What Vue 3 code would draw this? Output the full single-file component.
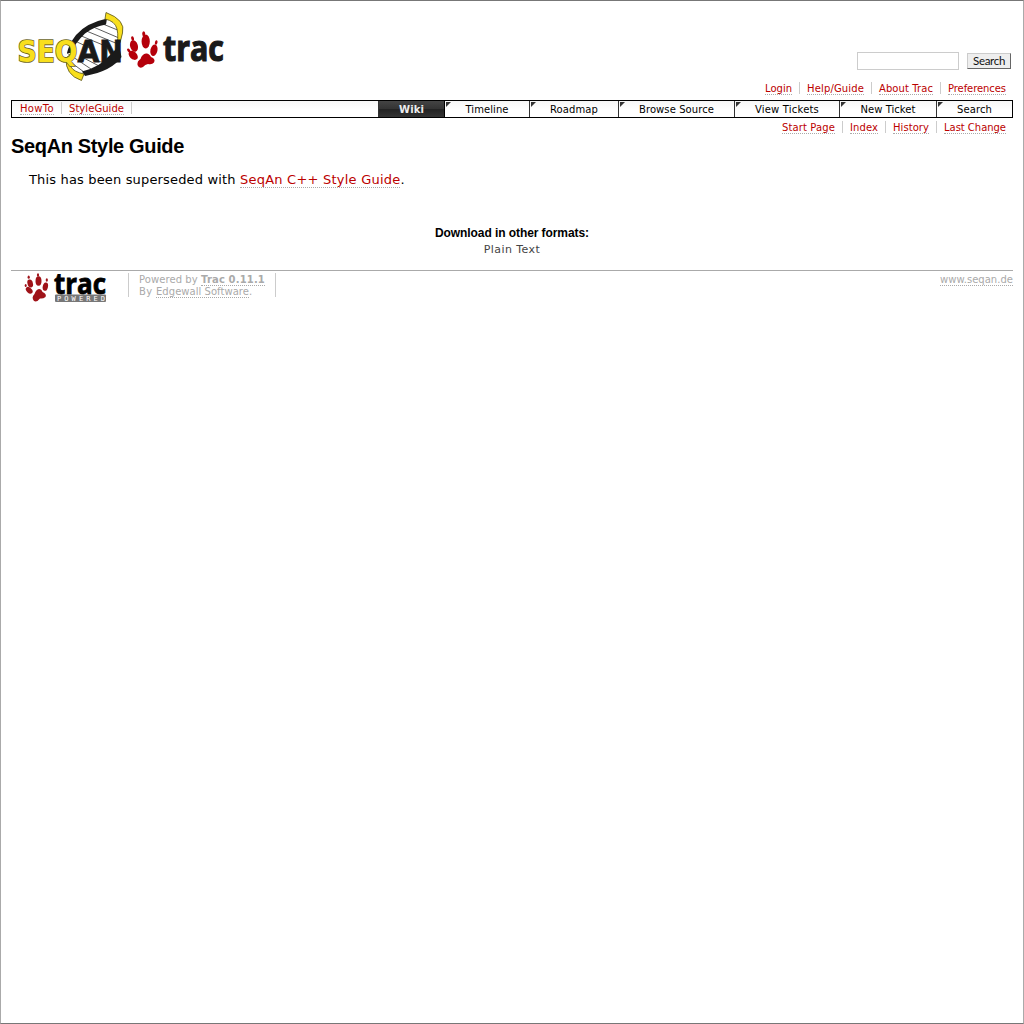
<script setup>
const vFit = {
  mounted(el, { value }) {
    const n = el.textContent.length
    const w = el.getBoundingClientRect().width
    el.style.letterSpacing = ((value - w) / n).toFixed(3) + 'px'
  }
}
const meta = [['Login', 27], ['Help/Guide', 57], ['About Trac', 54], ['Preferences', 58]]
const context = [['Start Page', 53], ['Index', 28], ['History', 36], ['Last Change', 62]]
const tabs = [
  ['Wiki', 66, 25], ['Timeline', 85, 43], ['Roadmap', 89, 48], ['Browse Source', 116, 75],
  ['View Tickets', 105, 64], ['New Ticket', 97, 55], ['Search', 76, 35]
]
</script>

<template>
  <div class="page">
    <header class="banner">
      <svg class="logo" width="236" height="90" viewBox="0 0 236 90">
        <path d="M105 22Q114 24 119 29L121 39L120 50Q113 66 84 74L67 61Q69 44 80 34Q91 25 105 22Z" fill="#fff" />
        <g stroke="#333" stroke-width=".8">
          <path d="M98 22L120 31M91 26L119 38M84 30L118 44M79 35L103 45M75 41L90 48M67 53L91 69M69 61L84 72M80 56L99 66M96 60L106 64" />
        </g>
        <path d="M107 18.500Q86 23 76 35Q69 44 67 53L71 53Q75 43 85 33.500Q95 26 106 24.500Z" fill="#1a1a1a" />
        <path d="M119 46L121.500 57Q112 71 85 76L82 71.500Q100 67 109 56Z" fill="#1a1a1a" />
        <path d="M106 12.500Q126 20 122.500 33Q121 43 116 50Q119 37 117 29Q115 21 105 19Z" fill="#f8df1d" stroke="#55501a" stroke-width=".8" />
        <path d="M71 54Q68 60 71 67Q74 72 84 74L81.500 80.500Q65 75 66 58Z" fill="#f8df1d" stroke="#55501a" stroke-width=".8" />
        <g class="seq">
          <text x="17.500" y="62" textLength="60" lengthAdjust="spacingAndGlyphs" class="outline">SEQ</text>
          <text x="77.500" y="61.500" textLength="45.500" lengthAdjust="spacingAndGlyphs" fill="#1a1a1a" stroke="#1a1a1a" stroke-width=".8">AN</text>
        </g>
        <g fill="#b5000b">
          <ellipse cx="145.700" cy="41.500" rx="4.100" ry="7" />
          <ellipse cx="134" cy="46" rx="3.900" ry="5.900" transform="rotate(-16 134 46)" />
          <ellipse cx="154" cy="50.300" rx="3.500" ry="5.800" transform="rotate(12 154 50)" />
          <ellipse cx="133.300" cy="55.500" rx="3.700" ry="5.400" transform="rotate(-45 133 55.500)" />
          <ellipse cx="143.700" cy="33.800" rx="1.500" ry="2.500" />
          <ellipse cx="132.600" cy="38.500" rx="1.400" ry="2.300" transform="rotate(-15 132.600 38.500)" />
          <ellipse cx="156.300" cy="42.500" rx="1.300" ry="2.300" transform="rotate(12 156 42)" />
          <ellipse cx="128.700" cy="50.400" rx="1.300" ry="2" transform="rotate(-40 128.700 50.400)" />
          <path d="M146 53.500Q149 53 151 57Q156 59 154 62.500Q152 65 148 64Q145 64.500 143 67Q139 69 137.500 65Q137 61 140.500 59Q142 54 146 53.500Z" />
        </g>
        <text class="word" x="163" y="61" textLength="61" lengthAdjust="spacingAndGlyphs">trac</text>
      </svg>
      <form class="search" @submit.prevent>
        <input type="text" aria-label="Search text">
        <button type="submit"><span v-fit="32">Search</span></button>
      </form>
    </header>
    <nav class="links meta">
      <span v-for="[t, w] in meta" :key="t" class="item"><a v-fit="w">{{ t }}</a></span>
    </nav>
    <nav class="mainnav">
      <div class="quick">
        <span class="item"><a v-fit="34">HowTo</a></span>
        <span class="item"><a v-fit="55">StyleGuide</a></span>
      </div>
      <div v-for="([t, w, f], i) in tabs" :key="t" class="tab" :class="{ active: i === 0 }" :style="{ width: w + 'px' }">
        <svg v-if="i" class="corner" width="5" height="5"><path d="M0 0H5L0 5Z" fill="#333" /></svg>
        <span v-fit="f">{{ t }}</span>
      </div>
    </nav>
    <nav class="links context">
      <span v-for="[t, w] in context" :key="t" class="item"><a v-fit="w">{{ t }}</a></span>
    </nav>
    <main>
      <h1><span v-fit="173">SeqAn Style Guide</span></h1>
      <p><span v-fit="211">This has been superseded with </span><a v-fit="160.500">SeqAn C++ Style Guide</a>.</p>
    </main>
    <section class="formats">
      <h3><span v-fit="154">Download in other formats:</span></h3>
      <div><span v-fit="56.500">Plain Text</span></div>
    </section>
    <footer>
      <svg class="powered" width="107" height="32" viewBox="0 0 107 32">
        <g fill="#9f1218">
          <ellipse cx="27.500" cy="8" rx="3" ry="4.800" />
          <ellipse cx="19.200" cy="10.500" rx="2.700" ry="4.100" transform="rotate(-16 19 10.500)" />
          <ellipse cx="34.300" cy="13.700" rx="2.600" ry="4.200" transform="rotate(12 34.500 14)" />
          <ellipse cx="18.300" cy="17.500" rx="2.600" ry="4" transform="rotate(-45 18 17.500)" />
          <ellipse cx="27" cy="1.900" rx="1.100" ry="1.700" />
          <ellipse cx="17.700" cy="4.200" rx="1.100" ry="1.600" />
          <ellipse cx="35.800" cy="7" rx="1.100" ry="1.800" />
          <ellipse cx="14.700" cy="12.500" rx="1" ry="1.500" />
          <path d="M28 16Q30.500 16 31.500 19Q36 21 34.500 24Q32 26 29 25.500Q26 29.500 23 28Q20 24.500 23.500 21Q25 16.500 28 16Z" />
        </g>
        <text class="small-word" x="43" y="20.800" textLength="52" lengthAdjust="spacingAndGlyphs">trac</text>
        <rect x="44" y="21.500" width="51" height="7.500" rx="1" fill="#777" />
        <text class="tiny" x="46" y="28" textLength="48" lengthAdjust="spacing">POWERED</text>
      </svg>
      <div class="credit">
        <div><span v-fit="62">Powered by </span><a v-fit="64"><b>Trac 0.11.1</b></a></div>
        <div><span v-fit="17">By </span><a v-fit="93">Edgewall Software</a>.</div>
      </div>
      <div class="site"><a v-fit="73">www.seqan.de</a></div>
    </footer>
  </div>
</template>

<style>
body { background: #fff; }
</style>

<style scoped>
* { box-sizing: border-box; }
.page {
  height: 1024px;
  padding: 0 10px;
  border: 1px solid #aaa;
  border-top-color: #777;
  border-bottom-color: #777;
  background: #fff;
  color: #000;
  font: 13px/15px Verdana, "DejaVu Sans", sans-serif;
  overflow: hidden;
}
span, a, b { white-space: pre; }
a { display: inline-block; color: #b00; border-bottom: 1px dotted #aaa; }
.banner { display: flex; justify-content: space-between; height: 80px; margin-left: -11px; margin-top: -1px; }
.logo { display: block; }
.seq { font: bold 30.500px "DejaVu Sans", sans-serif; }
.outline { fill: #f8df1d; stroke: #6b641f; stroke-width: 1.6px; paint-order: stroke; }
.word { font: bold 35px "Open Sans", sans-serif; fill: #1a1a1a; stroke: #1a1a1a; stroke-width: 1.2px; }
.search { display: flex; gap: 8px; padding: 52px 2px 0 0; }
.search input { width: 102px; height: 18px; padding: 0 3px; border: 1px solid #ccc; outline: 0; }
.search button {
  display: flex; justify-content: center; width: 44px; height: 16px; margin-top: 1px; padding: 0;
  border: 1px solid #666; border-top-color: #ccc; border-left-color: #ccc; border-radius: 0;
  background: #eee; color: #111; font: 11.500px/14px Lato, "Open Sans", sans-serif;
}
.links { display: flex; justify-content: flex-end; height: 20px; padding-top: 2px; font-size: 10px; line-height: 14px; }
.item { display: flex; height: 12px; padding: 0 7px; border-right: 1px solid #ccc; }
.item a { height: 13px; }
.links .item:last-child { border: 0; padding-right: 7px; }
.mainnav {
  display: flex; height: 18px; border: 1px solid #000; font-size: 10px;
  background: linear-gradient(#f6f6f6, #fff 60%);
}
.quick { display: flex; flex: 1; padding: 1px 0 0 1px; line-height: 14px; }
.tab { position: relative; display: flex; justify-content: center; border-left: 1px solid #333; line-height: 17px; }
.tab:nth-child(3) { border-left-color: #000; }
.tab.active { background: linear-gradient(#444, #333 50%, #222 51%, #333); color: #eee; font-weight: bold; }
.corner { position: absolute; left: 1px; top: 1px; }
.context { height: 18px; padding-top: 3px; }
h1 { margin: -1px 0 0; font: bold 20px/22px "Liberation Sans", Arial, sans-serif; }
main p { margin: 15px 18px 0; line-height: 15px; }
main p a { height: 16px; vertical-align: top; }
.formats { margin-top: 37px; text-align: center; font-size: 11px; color: #444; }
.formats h3 { margin: 0; color: #000; font: bold 12px/16px "Liberation Sans", Arial, sans-serif; }
.formats div { line-height: 17px; }
footer { display: flex; height: 36px; margin-top: 12px; padding-top: 2px; border-top: 1px solid #aaa; color: #aaa; font-size: 10px; line-height: 14px; }
footer a { color: #aaa; border-color: #aaa; height: 13px; vertical-align: top; }
.powered { margin-right: 10px; }
.small-word { font: bold 28px "Open Sans", sans-serif; fill: #000; stroke: #000; stroke-width: .8px; }
.tiny { font: 7px "DejaVu Sans Mono", monospace; fill: #fff; }
.credit { width: 148px; height: 24px; padding-left: 10px; border-left: 1px solid #ccc; border-right: 1px solid #ccc; }
.credit div { height: 12px; }
.site { margin-left: auto; }
</style>
